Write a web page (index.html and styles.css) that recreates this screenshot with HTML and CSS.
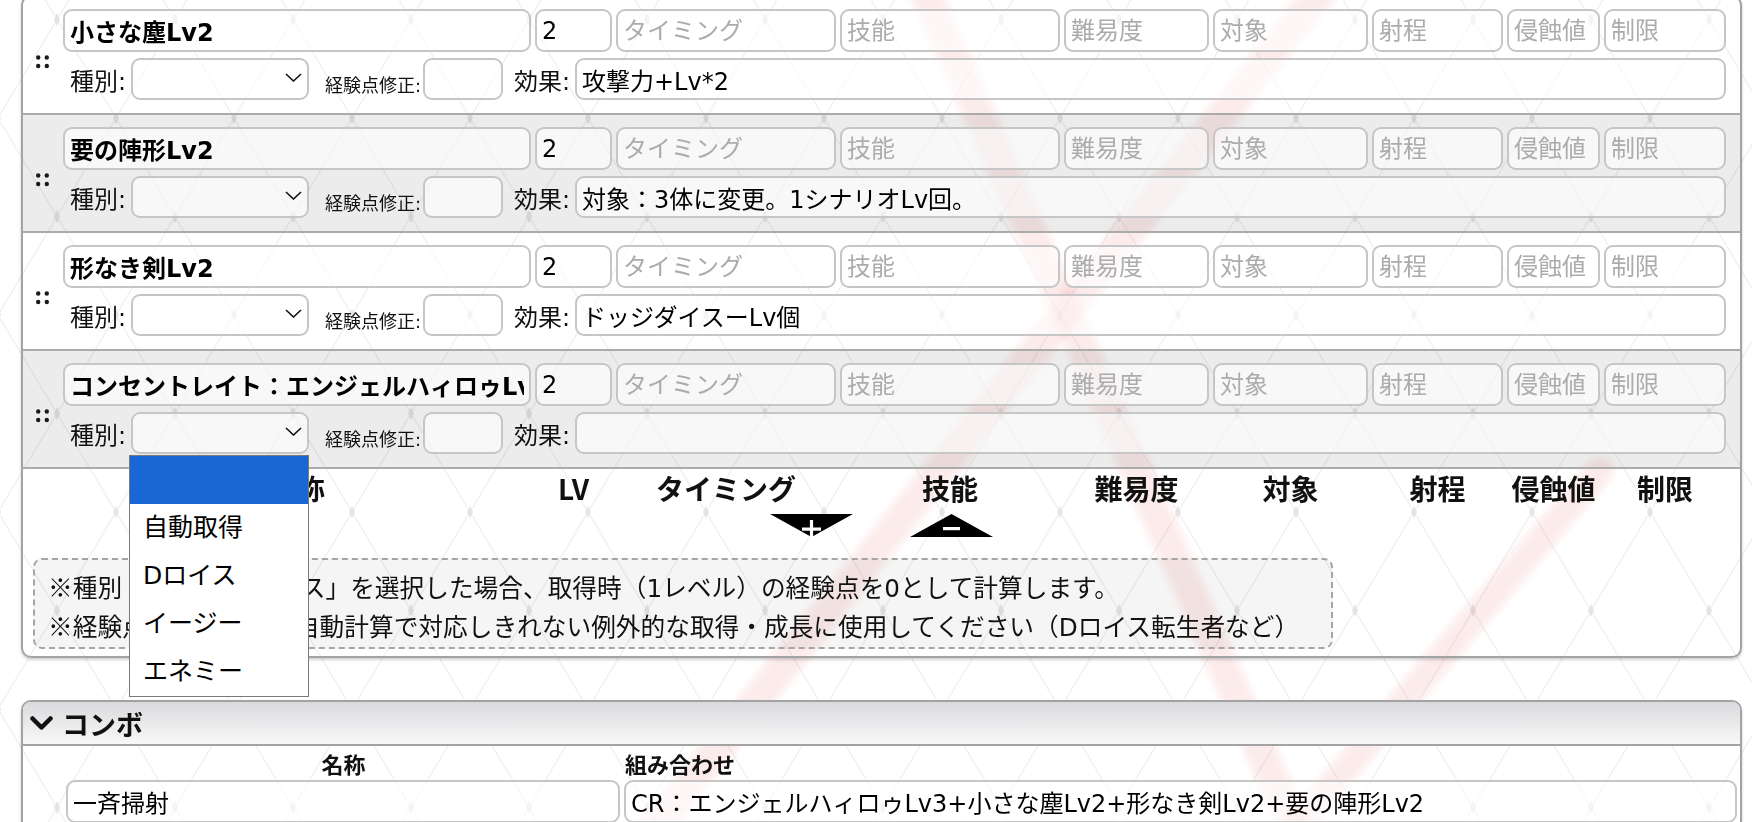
FILE: index.html
```html
<!DOCTYPE html>
<html lang="ja">
<head>
    <meta charset="UTF-8">
    <meta name="viewport" content="width=device-width, initial-scale=1.0">
    <title>エフェクト / コンボ</title>
    <link rel="stylesheet" href="styles.css">
</head>
<body>
    <!-- page backdrop: lattice + the big red X -->
    <svg class="backdrop" width="1752" height="822" viewBox="0 0 1752 822" aria-hidden="true">
        <defs>
            <pattern id="lattice" x="-2" y="-79" width="118" height="197" patternUnits="userSpaceOnUse">
                <path d="M0 0L118 197M118 0L0 197" stroke="#efefef" stroke-width="1.2" fill="none"/>
                <path d="M59 92l3 6.5-3 6.5-3-6.5zM0-6l3 6-3 6-3-6zM118-6l3 6-3 6-3-6zM0 191l3 6-3 6-3-6zM118 191l3 6-3 6-3-6z" fill="#e4e4e4"/>
            </pattern>
            <filter id="soft"><feGaussianBlur stdDeviation="3.5"/></filter>
        </defs>
        <rect width="1752" height="822" fill="#fff"/>
        <rect width="1752" height="822" fill="url(#lattice)"/>
        <g fill="none" stroke="#e0282d" stroke-opacity=".1" stroke-linecap="round" filter="url(#soft)">
            <path d="M920 -20L1300 840" stroke-width="30"/>
            <path d="M1330 -20L645 840" stroke-width="30"/>
            <path d="M1285 840L1600 470" stroke-width="26"/>
        </g>
    </svg>

    <main class="sheet">
        <section class="box effects">
            <div class="effect-list">
                <div class="effect-row">
                    <span class="handle"><svg width="13" height="14" viewBox="0 0 13 14"><circle cx="2.2" cy="2.5" r="2.2"/><circle cx="10.8" cy="2.5" r="2.2"/><circle cx="2.2" cy="11" r="2.2"/><circle cx="10.8" cy="11" r="2.2"/></svg></span>
                    <input class="name" value="小さな塵Lv2">
                    <input class="lv" value="2">
                    <input placeholder="タイミング">
                    <input placeholder="技能">
                    <input placeholder="難易度">
                    <input placeholder="対象">
                    <input placeholder="射程">
                    <input placeholder="侵蝕値">
                    <input placeholder="制限">
                    <div class="effect-sub">
                        <label class="lbl kind-lbl">種別:</label>
                        <span class="kind">
                            <select><option></option></select>
                            <svg class="chev" width="17" height="9" viewBox="0 0 17 9"><polyline points="1,1 8.5,8 16,1"/></svg>
                        </span>
                        <label class="lbl exp-lbl">経験点修正:</label>
                        <input class="exp">
                        <label class="lbl note-lbl">効果:</label>
                        <input class="note" value="攻撃力+Lv*2">
                    </div>
                </div>

                <div class="effect-row">
                    <span class="handle"><svg width="13" height="14" viewBox="0 0 13 14"><circle cx="2.2" cy="2.5" r="2.2"/><circle cx="10.8" cy="2.5" r="2.2"/><circle cx="2.2" cy="11" r="2.2"/><circle cx="10.8" cy="11" r="2.2"/></svg></span>
                    <input class="name" value="要の陣形Lv2">
                    <input class="lv" value="2">
                    <input placeholder="タイミング">
                    <input placeholder="技能">
                    <input placeholder="難易度">
                    <input placeholder="対象">
                    <input placeholder="射程">
                    <input placeholder="侵蝕値">
                    <input placeholder="制限">
                    <div class="effect-sub">
                        <label class="lbl kind-lbl">種別:</label>
                        <span class="kind">
                            <select><option></option></select>
                            <svg class="chev" width="17" height="9" viewBox="0 0 17 9"><polyline points="1,1 8.5,8 16,1"/></svg>
                        </span>
                        <label class="lbl exp-lbl">経験点修正:</label>
                        <input class="exp">
                        <label class="lbl note-lbl">効果:</label>
                        <input class="note" value="対象：3体に変更。1シナリオLv回。">
                    </div>
                </div>

                <div class="effect-row">
                    <span class="handle"><svg width="13" height="14" viewBox="0 0 13 14"><circle cx="2.2" cy="2.5" r="2.2"/><circle cx="10.8" cy="2.5" r="2.2"/><circle cx="2.2" cy="11" r="2.2"/><circle cx="10.8" cy="11" r="2.2"/></svg></span>
                    <input class="name" value="形なき剣Lv2">
                    <input class="lv" value="2">
                    <input placeholder="タイミング">
                    <input placeholder="技能">
                    <input placeholder="難易度">
                    <input placeholder="対象">
                    <input placeholder="射程">
                    <input placeholder="侵蝕値">
                    <input placeholder="制限">
                    <div class="effect-sub">
                        <label class="lbl kind-lbl">種別:</label>
                        <span class="kind">
                            <select><option></option></select>
                            <svg class="chev" width="17" height="9" viewBox="0 0 17 9"><polyline points="1,1 8.5,8 16,1"/></svg>
                        </span>
                        <label class="lbl exp-lbl">経験点修正:</label>
                        <input class="exp">
                        <label class="lbl note-lbl">効果:</label>
                        <input class="note" value="ドッジダイスーLv個">
                    </div>
                </div>

                <div class="effect-row">
                    <span class="handle"><svg width="13" height="14" viewBox="0 0 13 14"><circle cx="2.2" cy="2.5" r="2.2"/><circle cx="10.8" cy="2.5" r="2.2"/><circle cx="2.2" cy="11" r="2.2"/><circle cx="10.8" cy="11" r="2.2"/></svg></span>
                    <input class="name" value="コンセントレイト：エンジェルハィロゥLv3">
                    <input class="lv" value="2">
                    <input placeholder="タイミング">
                    <input placeholder="技能">
                    <input placeholder="難易度">
                    <input placeholder="対象">
                    <input placeholder="射程">
                    <input placeholder="侵蝕値">
                    <input placeholder="制限">
                    <div class="effect-sub">
                        <label class="lbl kind-lbl">種別:</label>
                        <span class="kind">
                            <select><option></option></select>
                            <svg class="chev" width="17" height="9" viewBox="0 0 17 9"><polyline points="1,1 8.5,8 16,1"/></svg>
                            <!-- the open option list of this select -->
                            <ul class="select-menu">
                                <li class="picked">&nbsp;</li>
                                <li>自動取得</li>
                                <li>Dロイス</li>
                                <li>イージー</li>
                                <li>エネミー</li>
                            </ul>
                        </span>
                        <label class="lbl exp-lbl">経験点修正:</label>
                        <input class="exp">
                        <label class="lbl note-lbl">効果:</label>
                        <input class="note">
                    </div>
                </div>
            </div>

            <div class="effect-head">
                <span></span>
                <span>名称</span>
                <span>LV</span>
                <span>タイミング</span>
                <span>技能</span>
                <span>難易度</span>
                <span>対象</span>
                <span>射程</span>
                <span>侵蝕値</span>
                <span>制限</span>
            </div>

            <div class="row-buttons">
                <svg width="83" height="23" viewBox="0 0 83 23" aria-label="追加"><polygon points="0,0 83,0 41.5,23" fill="#000"/><rect x="32" y="13.5" width="19" height="3.2" fill="#fff"/><rect x="39.9" y="6" width="3.2" height="17" fill="#fff"/></svg>
                <svg width="83" height="23" viewBox="0 0 83 23" aria-label="削除"><polygon points="41.5,0 83,23 0,23" fill="#000"/><rect x="33" y="13" width="17" height="3.2" fill="#fff"/></svg>
            </div>

            <div class="annotate">
                <span class="mark">※</span>種別「自動」「Dロイス」を選択した場合、取得時（1レベル）の経験点を0として計算します。<br>
                <span class="mark">※</span>経験点修正は、主に自動計算で対応しきれない例外的な取得・成長に使用してください（Dロイス転生者など）
            </div>
        </section>

        <section class="box combo">
            <h2 class="box-title">
                <svg width="23" height="14" viewBox="0 0 23 14"><polyline points="2.5,2.5 11.5,11.5 20.5,2.5"/></svg>
                コンボ
            </h2>
            <div class="combo-grid">
                <div class="combo-head center">名称</div>
                <div class="combo-head">組み合わせ</div>
                <input value="一斉掃射">
                <input value="CR：エンジェルハィロゥLv3+小さな塵Lv2+形なき剣Lv2+要の陣形Lv2">
            </div>
        </section>
    </main>
</body>
</html>
```

FILE: styles.css
```css
html {
    overflow: hidden;
}

body {
    margin: 0;
    font-family: "DejaVu Sans", "Noto Sans CJK JP", sans-serif;
    font-size: 24px;
    color: #111;
    background: #fff;
}

.backdrop {
    position: fixed;
    top: 0;
    left: 0;
    z-index: -1;
}

.sheet {
    padding: 0 10px 0 21px;
}

.box {
    border: 2px solid #a3a3a3;
    border-radius: 10px;
    box-shadow: 0 2px 3px rgba(0, 0, 0, 0.18);
}

/* effects table */
.effects {
    margin-top: -5px;
    padding-bottom: 7px;
}

.effect-row,
.effect-head {
    display: grid;
    grid-template-columns: 36px 468px 77px 220px 220px 145px 155px 131px 93px 122px;
    column-gap: 4px;
    padding-right: 14px;
}

.effect-row {
    row-gap: 6px;
    padding-top: 12px;
    padding-bottom: 13px;
    border-bottom: 2px solid #ababab;
}

.effect-row:nth-child(even) {
    background: rgba(0, 0, 0, 0.075);
}

.handle {
    grid-row: 1 / 3;
    justify-self: end;
    align-self: start;
    margin: 46px 10px 0 0;
    line-height: 0;
}

.handle svg {
    fill: #1a1a1a;
}

input,
select {
    font: inherit;
    color: #000;
    box-sizing: border-box;
    width: 100%;
    min-width: 0;
    height: 43px;
    margin: 0;
    padding: 0 5px;
    border: 2px solid #c6c6c6;
    border-radius: 9px;
    background: rgba(255, 255, 255, 0.6);
    outline: none;
}

input::placeholder {
    color: #acacac;
}

.name {
    font-weight: bold;
}

.effect-sub {
    grid-column: 2 / -1;
    display: flex;
    align-items: center;
    height: 42px;
}

.effect-sub input,
.effect-sub select {
    height: 42px;
}

.lbl {
    flex: none;
    box-sizing: border-box;
    white-space: nowrap;
}

.kind-lbl {
    width: 68px;
    padding-left: 7px;
}

.exp-lbl {
    width: 114px;
    padding: 10px 0 0 16px;
    font-size: 18px;
}

.note-lbl {
    width: 72px;
    padding-left: 11px;
}

.kind {
    position: relative;
    flex: none;
    width: 178px;
    height: 42px;
}

.kind select {
    appearance: none;
    -webkit-appearance: none;
}

.chev {
    position: absolute;
    right: 7px;
    top: 15px;
    fill: none;
    stroke: #111;
    stroke-width: 1.6;
    pointer-events: none;
}

.exp {
    flex: none;
    width: 80px;
}

.note {
    flex: 1;
}

/* open select list */
.select-menu {
    position: absolute;
    top: 43px;
    left: -2px;
    z-index: 10;
    width: 180px;
    box-sizing: border-box;
    margin: 0;
    padding: 0;
    list-style: none;
    background: #fff;
    border: 1px solid #7a7a7a;
    font-size: 25px;
    color: #000;
}

.select-menu li {
    height: 48px;
    line-height: 48px;
    padding-left: 13px;
}

.select-menu .picked {
    background: #1a66d2;
}

.effect-head {
    height: 38px;
    align-items: center;
    text-align: center;
    font: bold 28px/38px "Noto Sans CJK JP", sans-serif;
}

.row-buttons {
    display: flex;
    justify-content: center;
    gap: 57px;
    margin-top: 7px;
    line-height: 0;
}

.annotate {
    width: 1300px;
    height: 91px;
    box-sizing: border-box;
    margin: 21px 0 0 10px;
    padding: 8px 13px;
    border: 2px dashed #a5a5a5;
    border-radius: 9px;
    background: rgba(0, 0, 0, 0.04);
    font-size: 24.7px;
    line-height: 36px;
    color: #111;
    overflow: hidden;
}

.mark {
    font-family: "Noto Sans CJK JP", sans-serif;
}

/* combo section */
.combo {
    margin-top: 42px;
    overflow: hidden;
}

.box-title {
    display: flex;
    align-items: center;
    gap: 9px;
    height: 42px;
    margin: 0;
    padding-left: 7px;
    font: bold 27px "Noto Sans CJK JP", sans-serif;
    color: #111;
    background: linear-gradient(#dadade, #f8f8f8);
    border-bottom: 2px solid #a3a3a3;
}

.box-title svg {
    fill: none;
    stroke: #111;
    stroke-width: 4.5;
    stroke-linecap: round;
    stroke-linejoin: round;
}

.combo-grid {
    display: grid;
    grid-template-columns: 554px 1fr;
    column-gap: 4px;
    padding: 0 3px 20px 43px;
}

.combo-head {
    height: 34px;
    font: bold 22px/34px "Noto Sans CJK JP", sans-serif;
    padding-left: 1px;
}

.combo-head.center {
    text-align: center;
}
```
